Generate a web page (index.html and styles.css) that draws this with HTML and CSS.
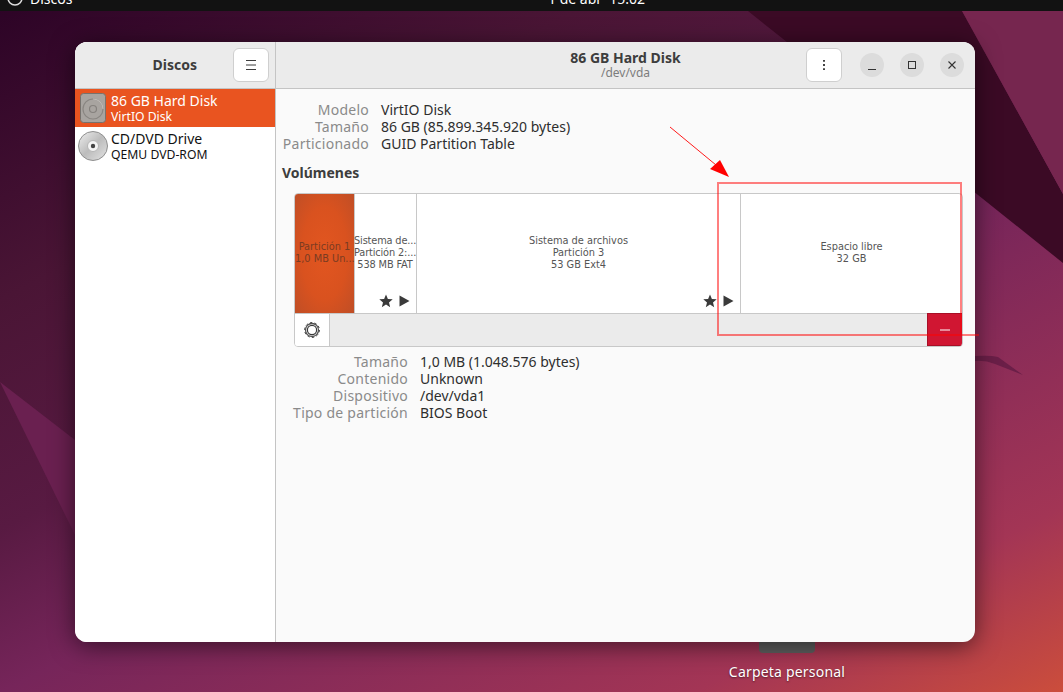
FILE: index.html
```html
<!DOCTYPE html>
<html>
<head>
    <title>Discos</title>
    <link rel="stylesheet" href="styles.css">
</head>
<body>
    <svg class="wallpaper" width="1063" height="692" viewBox="0 0 1063 692">
        <defs>
            <linearGradient id="wall" gradientUnits="userSpaceOnUse" x1="0" y1="0" x2="489" y2="978">
                <stop offset="0" stop-color="#2c0326"/>
                <stop offset="0.245" stop-color="#4a1535"/>
                <stop offset="0.433" stop-color="#581a42"/>
                <stop offset="0.566" stop-color="#76255a"/>
                <stop offset="0.85" stop-color="#a33555"/>
                <stop offset="1" stop-color="#cb4d3c"/>
            </linearGradient>
        </defs>
        <rect width="1063" height="692" fill="url(#wall)"/>
        <polygon points="748,11 962,11 1063,194 1063,263 787,42" fill="#3b0a25"/>
        <polygon points="962,11 1063,11 1063,194" fill="#76264f"/>
        <polygon points="0,382 75,440 75,535" fill="#6a2050"/>
        <path d="M975 356 Q990 355 998 357 L1023 375 L995 364 Q985 360 975 361 Z" fill="#6b1f48"/>
    </svg>

    <div class="topbar">
        <svg class="topbar-icon" width="16" height="16" viewBox="0 0 16 16">
            <circle cx="8" cy="-2" r="7" fill="none" stroke="#ddd" stroke-width="1.5"/>
        </svg>
        <span class="topbar-app">Discos</span>
        <span class="topbar-clock">1 de abr&nbsp;&nbsp;15:02</span>
    </div>

    <div class="window">
        <div class="sidebar">
            <div class="header sidebar-header">
                <span class="app-title sidebar-title">Discos</span>
                <button class="header-btn">
                    <svg width="16" height="16" viewBox="0 0 16 16"><path d="M3 3.5h10M3 8h10M3 12.500h10" stroke="#3d3d3d" stroke-width="1" fill="none"/></svg>
                </button>
            </div>
            <div class="drive-list">
                <div class="drive selected">
                    <svg class="drive-icon" width="32" height="32" viewBox="0 0 32 32">
                        <rect x="3.500" y="1.500" width="25" height="29" rx="3" fill="#a8a4a0" stroke="#77726d"/>
                        <circle cx="16" cy="17" r="10" fill="none" stroke="#8a8682" stroke-width="1.200"/>
                        <path d="M16 7a10 10 0 0 1 10 10" fill="none" stroke="#bdb9b5" stroke-width="1.200"/>
                        <circle cx="16" cy="17" r="3.500" fill="none" stroke="#85817d" stroke-width="1.200"/>
                    </svg>
                    <div class="drive-text">
                        <div class="drive-name">86 GB Hard Disk</div>
                        <div class="drive-model">VirtIO Disk</div>
                    </div>
                </div>
                <div class="drive">
                    <svg class="drive-icon" width="32" height="32" viewBox="0 0 32 32">
                        <defs>
                            <linearGradient id="cd" x1="0" y1="0" x2="1" y2="1">
                                <stop offset="0" stop-color="#efefef"/>
                                <stop offset="0.5" stop-color="#bcbcbc"/>
                                <stop offset="1" stop-color="#e4e4e4"/>
                            </linearGradient>
                        </defs>
                        <circle cx="16" cy="16" r="14.500" fill="url(#cd)" stroke="#8f8f8f"/>
                        <circle cx="16" cy="16" r="5.500" fill="#f4f4f4" stroke="#b5b5b5"/>
                        <circle cx="16" cy="16" r="2.200" fill="#444"/>
                    </svg>
                    <div class="drive-text">
                        <div class="drive-name">CD/DVD Drive</div>
                        <div class="drive-model">QEMU DVD-ROM</div>
                    </div>
                </div>
            </div>
        </div>

        <div class="main">
            <div class="header main-header">
                <div class="main-title">
                    <div class="app-title">86 GB Hard Disk</div>
                    <div class="main-subtitle">/dev/vda</div>
                </div>
                <div class="header-actions">
                    <button class="header-btn">
                        <svg width="16" height="16" viewBox="0 0 16 16"><path d="M8 3v1.800M8 7.100v1.800M8 11.200v1.800" stroke="#2e2e2e" stroke-width="1.800" fill="none"/></svg>
                    </button>
                    <div class="window-controls">
                        <span class="win-btn"><svg width="16" height="16" viewBox="0 0 16 16"><path d="M4 12.500h8" stroke="#333" fill="none"/></svg></span>
                        <span class="win-btn"><svg width="16" height="16" viewBox="0 0 16 16"><rect x="4.500" y="4.500" width="7" height="7" stroke="#333" fill="none"/></svg></span>
                        <span class="win-btn"><svg width="16" height="16" viewBox="0 0 16 16"><path d="M4.500 4.500l7 7M11.500 4.500l-7 7" stroke="#333" stroke-width="1.100" fill="none"/></svg></span>
                    </div>
                </div>
            </div>

            <div class="content">
                <div class="info-grid disk-info">
                    <span class="info-label">Modelo</span><span>VirtIO Disk</span>
                    <span class="info-label">Tamaño</span><span>86 GB (85.899.345.920 bytes)</span>
                    <span class="info-label">Particionado</span><span>GUID Partition Table</span>
                </div>

                <div class="section-title">Volúmenes</div>

                <div class="volumes">
                    <div class="partitions">
                        <div class="partition part-boot">
                            <div class="part-line">Partición 1</div>
                            <div class="part-line">1,0 MB Un...</div>
                        </div>
                        <div class="partition part-efi">
                            <div class="part-line">Sistema de...</div>
                            <div class="part-line">Partición 2:...</div>
                            <div class="part-line">538 MB FAT</div>
                            <div class="part-icons">
                                <svg width="14" height="14" viewBox="0 0 14 14"><polygon points="7,0.500 8.900,5 13.700,5.300 10,8.400 11.200,13.200 7,10.600 2.800,13.200 4,8.400 0.300,5.300 5.100,5" fill="#3a3a3a"/></svg>
                                <svg width="11" height="12" viewBox="0 0 11 12"><polygon points="0.500,0.500 10.500,6 0.500,11.500" fill="#3a3a3a"/></svg>
                            </div>
                        </div>
                        <div class="partition part-root">
                            <div class="part-line">Sistema de archivos</div>
                            <div class="part-line">Partición 3</div>
                            <div class="part-line">53 GB Ext4</div>
                            <div class="part-icons">
                                <svg width="14" height="14" viewBox="0 0 14 14"><polygon points="7,0.500 8.900,5 13.700,5.300 10,8.400 11.200,13.200 7,10.600 2.800,13.200 4,8.400 0.300,5.300 5.100,5" fill="#3a3a3a"/></svg>
                                <svg width="11" height="12" viewBox="0 0 11 12"><polygon points="0.500,0.500 10.500,6 0.500,11.500" fill="#3a3a3a"/></svg>
                            </div>
                        </div>
                        <div class="partition part-free">
                            <div class="part-line">Espacio libre</div>
                            <div class="part-line">32 GB</div>
                        </div>
                    </div>
                    <div class="volume-toolbar">
                        <button class="tool-btn">
                            <svg width="18" height="18" viewBox="0 0 18 18">
                                <circle cx="9" cy="9" r="4.600" fill="none" stroke="#3a3a3a" stroke-width="1.200"/>
                                <circle cx="9" cy="9" r="6.500" fill="none" stroke="#555" stroke-width="1.300"/>
                                <circle cx="9" cy="9" r="7.400" fill="none" stroke="#3a3a3a" stroke-width="1" stroke-dasharray="2.300 2.350"/>
                            </svg>
                        </button>
                        <button class="delete-btn">
                            <svg width="12" height="4" viewBox="0 0 12 4"><path d="M1 2h10" stroke="#fff" stroke-width="1"/></svg>
                        </button>
                    </div>
                </div>

                <div class="info-grid part-info">
                    <span class="info-label">Tamaño</span><span>1,0 MB (1.048.576 bytes)</span>
                    <span class="info-label">Contenido</span><span>Unknown</span>
                    <span class="info-label">Dispositivo</span><span>/dev/vda1</span>
                    <span class="info-label">Tipo de partición</span><span>BIOS Boot</span>
                </div>
            </div>
        </div>
    </div>

    <div class="folder-peek"></div>
    <div class="desktop-label">Carpeta personal</div>

    <svg class="markup" width="1063" height="692" viewBox="0 0 1063 692">
        <line x1="670" y1="127" x2="716" y2="165" stroke="#ff1a1a" stroke-width="1"/>
        <polygon points="729,177 710,169 720,160" fill="#ff0000"/>
        <path d="M718 183H961V335H718Z M961 335H979" fill="none" stroke="#ff0000" stroke-opacity="0.5" stroke-width="2"/>
    </svg>
</body>
</html>
```

FILE: styles.css
```css
body {
    margin: 0;
    width: 1063px;
    height: 692px;
    position: relative;
    overflow: hidden;
    font-family: "Noto Sans", sans-serif;
    font-size: 14px;
    color: #2e2e2e;
}

button {
    padding: 0;
    font: inherit;
    cursor: pointer;
}

.wallpaper,
.markup {
    position: absolute;
    left: 0;
    top: 0;
}

.markup {
    z-index: 2;
    pointer-events: none;
}

.topbar {
    position: relative;
    height: 11px;
    background-color: #121212;
    color: #fff;
    overflow: hidden;
}

.topbar-icon {
    position: absolute;
    left: 7px;
    top: 0;
}

.topbar-app {
    position: absolute;
    left: 30px;
    bottom: 4px;
    line-height: 16px;
    font-size: 14px;
}

.topbar-clock {
    position: absolute;
    left: 548px;
    bottom: 4px;
    line-height: 16px;
    font-size: 14px;
}

.window {
    position: relative;
    z-index: 1;
    display: flex;
    width: 900px;
    height: 600px;
    margin: 31px 0 0 75px;
    border-radius: 12px;
    overflow: hidden;
    background-color: #fafafa;
    box-shadow: 0 4px 24px rgba(0, 0, 0, 0.55);
}

.header {
    display: flex;
    align-items: center;
    height: 46px;
    background-color: #ebebeb;
    border-bottom: 1px solid #c4c4c4;
}

.sidebar {
    flex: none;
    width: 200px;
    display: flex;
    flex-direction: column;
    background-color: #fff;
    border-right: 1px solid #c4c4c4;
}

.sidebar-header {
    justify-content: flex-end;
    padding-right: 6px;
    gap: 36px;
    background-color: #ebebeb;
}

.app-title {
    font-weight: 700;
    font-size: 14px;
    line-height: 17px;
    color: #3d3d3d;
}

.sidebar-title {
    padding-bottom: 2px;
}

.header-btn {
    width: 36px;
    height: 34px;
    display: flex;
    align-items: center;
    justify-content: center;
    background-color: #fff;
    border: 1px solid #cfcfcf;
    border-radius: 6px;
}

.drive {
    display: flex;
    align-items: center;
    height: 38px;
    padding-left: 2px;
    gap: 2px;
    color: #111;
}

.drive.selected {
    background-color: #e95420;
    color: #fff;
}

.drive-icon {
    flex: none;
}

.drive-text {
    padding-bottom: 1px;
}

.drive-name {
    font-size: 14px;
    line-height: 17px;
}

.drive-model {
    margin-top: 1px;
    font-size: 12.200px;
    line-height: 14px;
}

.main {
    flex: 1;
    display: flex;
    flex-direction: column;
}

.main-header {
    position: relative;
    justify-content: flex-end;
}

.main-title {
    position: absolute;
    left: 0;
    right: 0;
    top: 7px;
    text-align: center;
}

.main-subtitle {
    font-size: 12px;
    line-height: 14px;
    color: #7d7d7d;
}

.header-actions {
    display: flex;
    align-items: center;
    padding-right: 11px;
    gap: 18px;
}

.window-controls {
    display: flex;
    gap: 16px;
}

.win-btn {
    width: 24px;
    height: 24px;
    border-radius: 50%;
    background-color: #dcdcdc;
    display: flex;
    align-items: center;
    justify-content: center;
}

.content {
    padding: 12px 12px 0 6px;
}

.info-grid {
    display: grid;
    grid-auto-rows: 17px;
    line-height: 17px;
}

.disk-info {
    grid-template-columns: 87px auto;
    column-gap: 12px;
}

.part-info {
    grid-template-columns: 126px auto;
    column-gap: 12px;
    margin: 6px 0 0 0;
}

.info-label {
    text-align: right;
    color: #8a8a8a;
    letter-spacing: 0.25px;
    white-space: nowrap;
}

.section-title {
    margin-top: 12px;
    font-weight: 700;
    font-size: 14px;
    line-height: 17px;
    color: #3d3d3d;
}

.volumes {
    margin: 12px 0 0 12px;
    height: 152px;
    border: 1px solid #c8c8c8;
    border-radius: 4px;
    overflow: hidden;
    background-color: #fff;
}

.partitions {
    display: flex;
    height: 119px;
    border-bottom: 1px solid #c8c8c8;
    font-family: "DejaVu Sans", sans-serif;
    font-size: 9.800px;
    line-height: 12px;
    color: #555;
    text-align: center;
}

.partition {
    position: relative;
    display: flex;
    flex-direction: column;
    justify-content: center;
    flex: none;
    box-sizing: border-box;
    border-right: 1px solid #c8c8c8;
    min-width: 0;
    padding-bottom: 2px;
}

.part-line {
    white-space: nowrap;
}

.part-boot {
    width: 60px;
    background: radial-gradient(ellipse at center, #e25620 0%, #d9521f 55%, #bf4e26 100%);
    color: #7a3b22;
    padding: 0 0 2px 0;
}

.part-efi {
    width: 62px;
    letter-spacing: -0.15px;
}

.part-efi .part-line {
    margin-left: -1px;
}

.part-root {
    width: 324px;
}

.part-free {
    flex: 1;
    border-right: none;
}

.part-icons {
    position: absolute;
    right: 6px;
    bottom: 5px;
    display: flex;
    align-items: center;
    gap: 6px;
}

.volume-toolbar {
    display: flex;
    justify-content: space-between;
    height: 32px;
    background-color: #ebebeb;
}

.tool-btn {
    width: 35px;
    height: 32px;
    display: flex;
    align-items: center;
    justify-content: center;
    background-color: #fff;
    border: none;
    border-right: 1px solid #c8c8c8;
}

.delete-btn {
    width: 35px;
    height: 33px;
    margin-top: -1px;
    display: flex;
    align-items: center;
    justify-content: center;
    background-color: #d01632;
    border: 1px solid #a80f26;
    border-right: none;
}

.folder-peek {
    position: absolute;
    left: 759px;
    top: 636px;
    width: 56px;
    height: 17px;
    border-radius: 0 0 4px 4px;
    background-color: #5f5f5f;
}

.desktop-label {
    position: absolute;
    left: 687px;
    width: 200px;
    top: 663px;
    text-align: center;
    font-size: 14px;
    line-height: 18px;
    letter-spacing: 0.2px;
    color: #fff;
    text-shadow: 0 1px 2px rgba(0, 0, 0, 0.5);
}
```
